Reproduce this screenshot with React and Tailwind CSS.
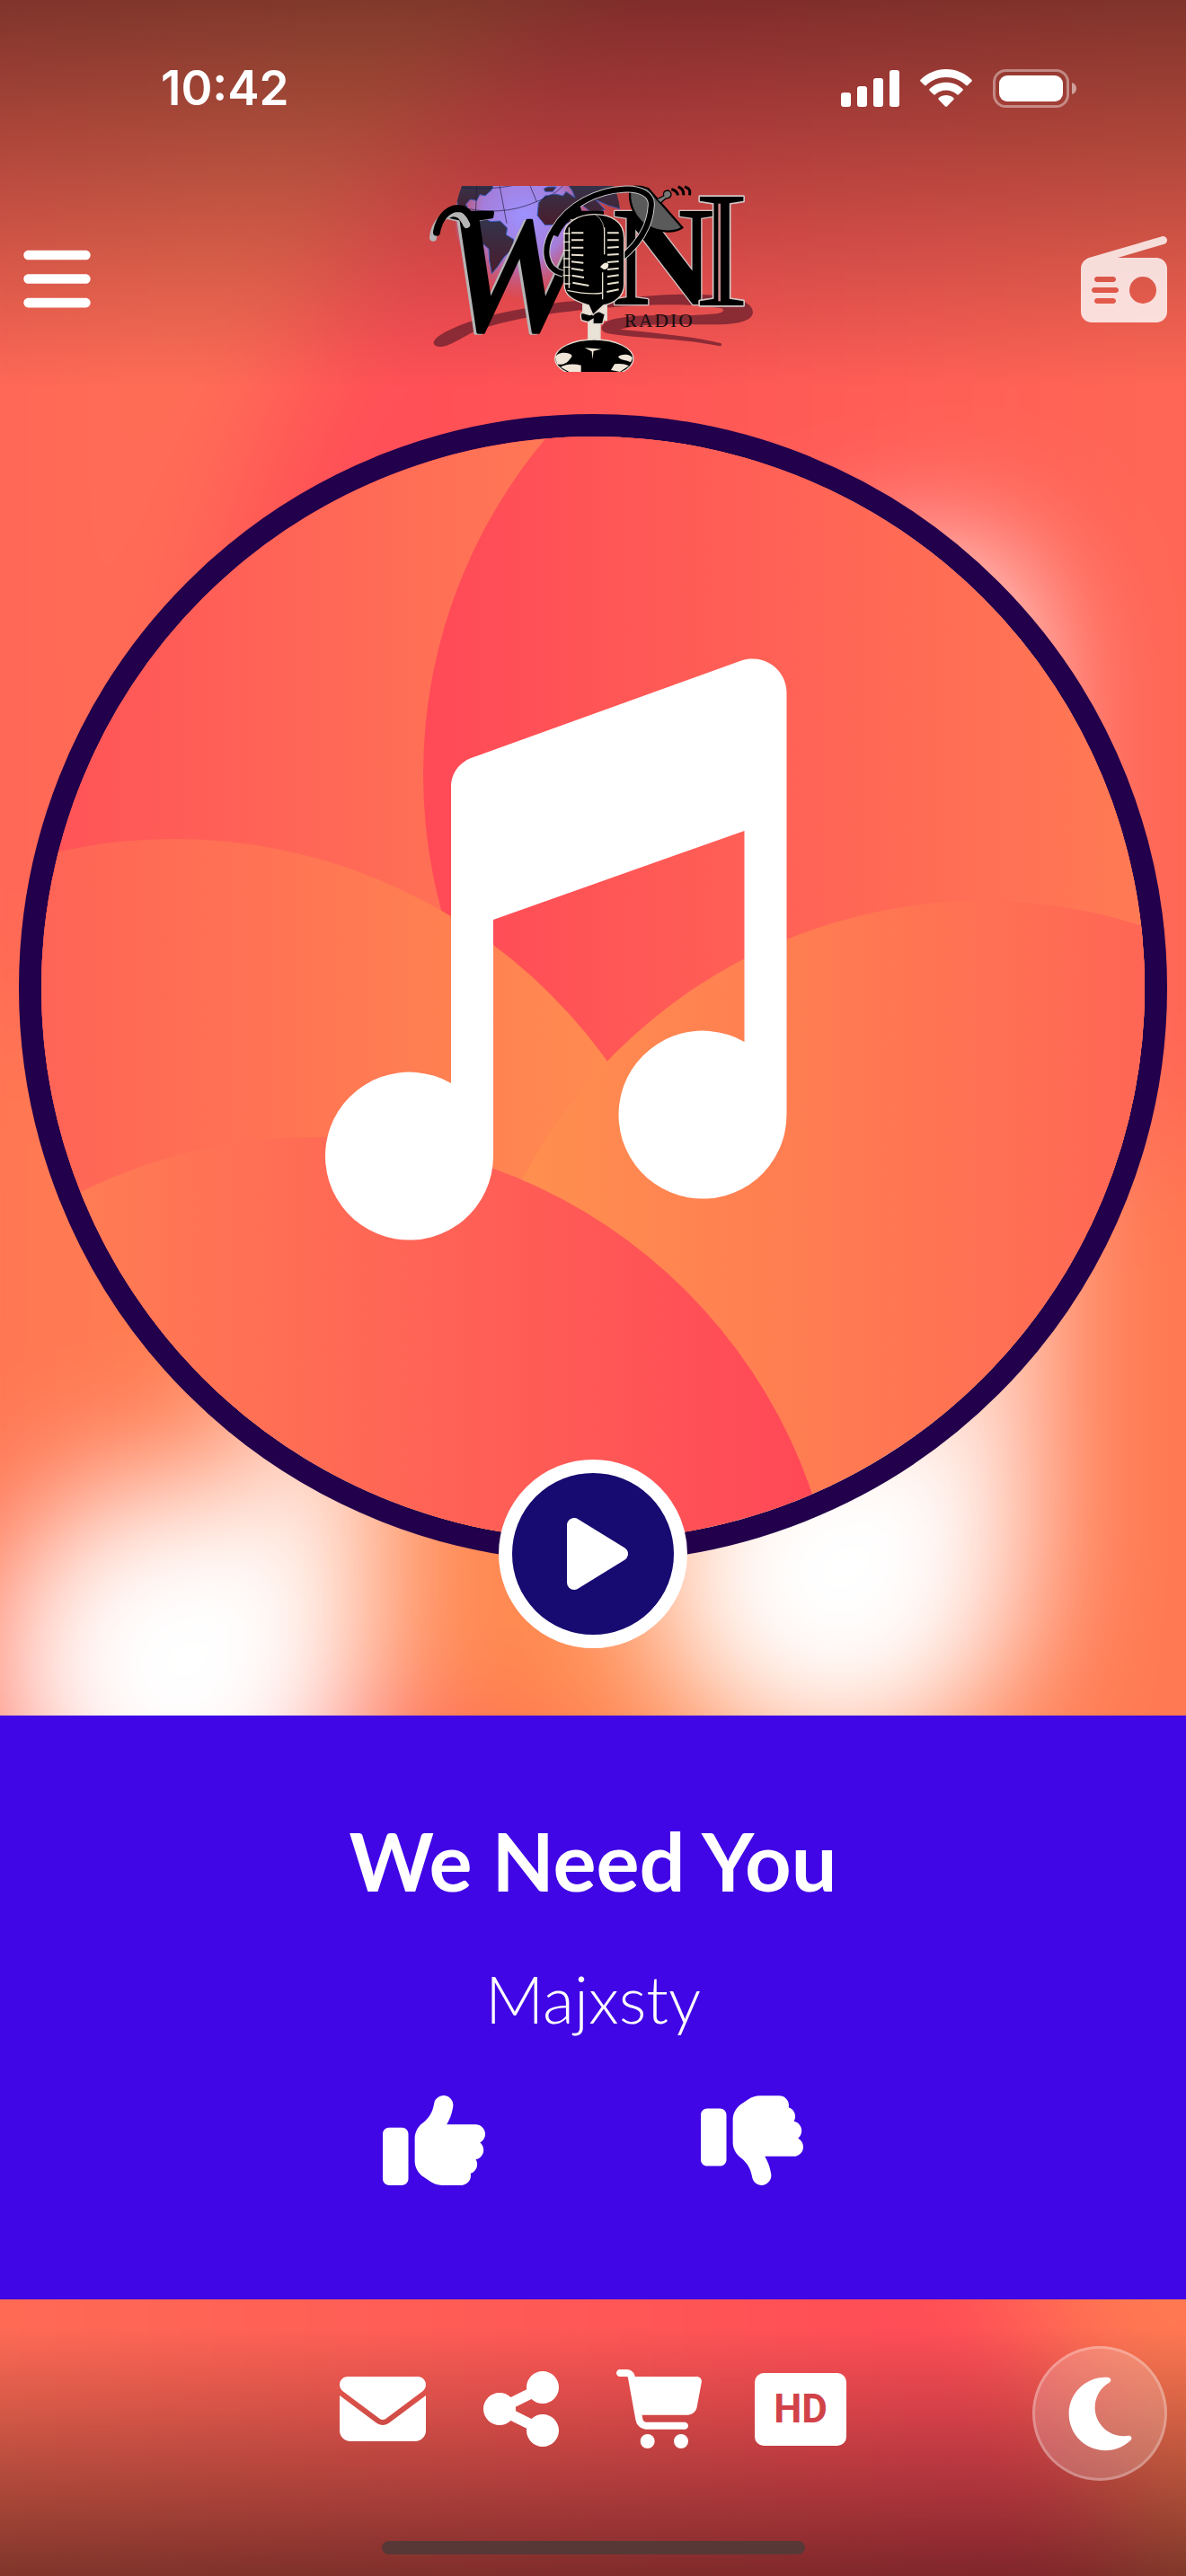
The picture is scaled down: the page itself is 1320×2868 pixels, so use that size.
import React, { useState } from "react";
import {
  FaBars,
  FaEnvelope,
  FaMoon,
  FaRadio,
  FaShareNodes,
  FaThumbsDown,
  FaThumbsUp,
} from "react-icons/fa6";

const track = { title: "We Need You", artist: "Majxsty" };

// Default cover art, also used (blurred) as the page backdrop
const CoverArt = ({ id, viewBox, className }) => (
  <svg
    viewBox={viewBox}
    preserveAspectRatio="xMidYMid slice"
    className={className}
    aria-hidden="true"
  >
    <defs>
      <linearGradient id={`${id}-base`} gradientUnits="userSpaceOnUse" x1="46" x2="610">
        <stop offset="0" stopColor="#ff5258" />
        <stop offset="1" stopColor="#ff7855" />
      </linearGradient>
      <linearGradient id={`${id}-top`} gradientUnits="userSpaceOnUse" x1="471" x2="1274">
        <stop offset="0" stopColor="#ff4957" />
        <stop offset="1" stopColor="#ff7b54" />
      </linearGradient>
      <linearGradient id={`${id}-left`} gradientUnits="userSpaceOnUse" x1="46" x2="677">
        <stop offset="0" stopColor="#ff6456" />
        <stop offset="1" stopColor="#ff8b50" />
      </linearGradient>
      <linearGradient id={`${id}-right`} gradientUnits="userSpaceOnUse" x1="581" x2="1274">
        <stop offset="0" stopColor="#ff8f4f" />
        <stop offset="1" stopColor="#ff6655" />
      </linearGradient>
      <linearGradient id={`${id}-bottom`} gradientUnits="userSpaceOnUse" x1="90" x2="915">
        <stop offset="0" stopColor="#ff7c54" />
        <stop offset="1" stopColor="#ff4757" />
      </linearGradient>
    </defs>
    <rect x="-400" y="0" width="2200" height="2200" fill={`url(#${id}-base)`} />
    <circle cx="1052" cy="862" r="581" fill={`url(#${id}-top)`} />
    <circle cx="194" cy="1527" r="593" fill={`url(#${id}-left)`} />
    <circle cx="1094" cy="1582" r="579" fill={`url(#${id}-right)`} />
    <circle cx="350" cy="1851" r="585" fill={`url(#${id}-bottom)`} />
    <path
      fill="#fff"
      d="M502 876C502 860 512 848 527 843L825 735.500A38 38 0 0 1 875.500 772V1241A93.500 93.500 0 1 1 828.500 1160V925L549 1024V1287A93.500 93.500 0 1 1 502 1206Z"
    />
  </svg>
);

const SignalIcon = () => (
  <svg viewBox="0 0 65 42" className="h-[42px] w-[65px]" fill="currentColor" aria-hidden="true">
    <rect x="0" y="26" width="11" height="16" rx="3" />
    <rect x="18" y="19" width="11" height="23" rx="3" />
    <rect x="36" y="10" width="11" height="32" rx="3" />
    <rect x="54" y="1" width="11" height="41" rx="3" />
  </svg>
);

const WifiIcon = () => (
  <svg viewBox="0 0 58 42" className="h-[42px] w-[58px]" fill="currentColor" aria-hidden="true">
    <path d="M29 0C40 0 50 4.500 57.200 11.500C58 12.300 58 13 57.300 13.700L53.200 17.800C52.500 18.500 51.800 18.500 51 17.800C45 12 37.400 9 29 9C20.600 9 13 12 7 17.800C6.200 18.500 5.500 18.500 4.800 17.800L.7 13.700C0 13 0 12.300 .8 11.500C8 4.500 18 0 29 0Z" />
    <path d="M29 14.700C36 14.700 42.300 17.300 47.200 21.700C48 22.400 48 23.200 47.300 23.900L43.100 28C42.400 28.700 41.700 28.700 40.900 28C37.600 25 33.500 23.400 29 23.400C24.500 23.400 20.400 25 17.100 28C16.300 28.700 15.600 28.700 14.900 28L10.700 23.900C10 23.200 10 22.400 10.800 21.700C15.700 17.300 22 14.700 29 14.700Z" />
    <path d="M29 29C32 29 34.800 30 37 31.700C37.900 32.400 37.900 33.100 37.200 33.900L30.200 41.200C29.400 42 28.600 42 27.800 41.200L20.800 33.900C20.100 33.100 20.100 32.400 21 31.700C23.200 30 26 29 29 29Z" />
  </svg>
);

const BatteryIcon = () => (
  <svg viewBox="0 0 93 43" className="h-[43px] w-[93px]" aria-hidden="true">
    <rect x="1.500" y="1.500" width="82" height="40" rx="13" fill="none" stroke="#fff" strokeOpacity=".4" strokeWidth="3" />
    <rect x="7" y="7" width="71" height="29" rx="9" fill="#fff" />
    <path d="M88 15C91.500 16 93 18.500 93 21.500S91.500 27 88 28Z" fill="#fff" fillOpacity=".5" />
  </svg>
);

const StationLogo = () => (
  <svg
    viewBox="0 51 1200 621"
    className="h-[207px] w-[400px] overflow-visible"
    role="img"
    aria-label="WONI Radio"
  >
    <defs>
      <radialGradient id="globe" gradientUnits="userSpaceOnUse" cx="370" cy="150" r="290">
        <stop offset="0" stopColor="#9d92ff" />
        <stop offset=".5" stopColor="#a184ea" stopOpacity=".9" />
        <stop offset="1" stopColor="#c05a80" stopOpacity="0" />
      </radialGradient>
      <linearGradient id="land" x1="0" y1="0" x2="0" y2="1">
        <stop offset="0" stopColor="#33344c" />
        <stop offset="1" stopColor="#4a1c2c" />
      </linearGradient>
      <clipPath id="logo-frame">
        <rect x="0" y="51" width="1200" height="621" />
      </clipPath>
      <clipPath id="globe-clip">
        <circle cx="416" cy="160" r="276" />
      </clipPath>
    </defs>

    {/* Globe */}
    <g clipPath="url(#logo-frame)">
      <g clipPath="url(#globe-clip)">
        <circle cx="416" cy="160" r="290" fill="url(#globe)" />
        <g fill="url(#land)" stroke="#3b5ec0" strokeWidth="3">
          <path d="M130 40H270L262 64L240 84L222 80L212 100L190 96L176 112L190 150L150 120Z" />
          <path d="M214 172L240 160L258 170L290 168L314 192L310 214L336 230L332 260L302 290L282 320L262 344L254 300L252 262L228 240L216 206Z" />
          <path d="M284 370L292 380L284 382Z" />
          <path d="M436 60L450 54H478L466 70L440 70Z" />
          <path d="M510 40H690L690 128L650 116L610 98L640 130L600 144L560 112L540 130L530 170L500 180L440 182L414 150L418 108L440 84L476 78L500 84L510 70L540 90L530 66Z" />
        </g>
        <path
          d="M150 56Q250 66 330 50M140 118Q290 158 410 104Q470 84 500 50M212 50L208 150M288 50L312 176M390 50L412 104"
          fill="none"
          stroke="#1e1e3c"
          strokeWidth="2"
        />
      </g>
    </g>

    {/* Cable shadow */}
    <path
      fill="#7a2430"
      fillOpacity=".85"
      d="M70 568C84 540 200 492 330 468C430 448 500 436 560 434C700 430 800 410 960 414C1080 418 1134 440 1134 474C1130 504 1080 514 1000 514C880 512 760 510 690 530C800 540 930 554 1026 576C1032 580 1030 586 1022 586C900 560 760 562 650 544C620 536 622 516 650 502C740 470 900 492 1010 478C1036 474 1040 466 1030 460C900 438 720 448 560 466C420 480 280 504 190 544C140 572 110 590 86 588C70 586 64 578 70 568Z"
    />

    {/* Lettering */}
    <g fontFamily="'Liberation Serif', serif" strokeLinejoin="round">
      <text
        x="86"
        y="530"
        fontSize="600"
        fontStyle="italic"
        fill="#000"
        stroke="#000"
        strokeWidth="10"
        className="drop-shadow-[-9px_3px_0px_#b5b5b5]"
      >
        W
      </text>
      <g fill="#000" stroke="#d0c4c4" strokeWidth="8" paintOrder="stroke">
        <text x="664" y="446" fontSize="475" fontWeight="700">N</text>
        <text x="937" y="450" fontSize="555" strokeWidth="10">I</text>
      </g>
    </g>
    <path d="M1022 110V436" stroke="#c98a8d" strokeWidth="8" />
    <path
      fill="none"
      stroke="#b5b5b5"
      strokeWidth="24"
      strokeLinecap="round"
      d="M66 224C68 190 90 150 130 142C150 140 164 150 178 180"
    />
    <path
      fill="none"
      stroke="#000"
      strokeWidth="24"
      strokeLinecap="round"
      d="M78 206C84 166 110 128 148 126C180 126 196 150 206 190"
    />

    {/* Satellite dish */}
    <g stroke="#000" strokeWidth="7">
      <path fill="#5a5a5a" d="M726 56C716 100 734 170 800 194C840 208 880 204 898 190L784 60Q750 48 726 56Z" />
      <path fill="#777" d="M812 96L836 84Q832 66 852 66Q868 76 856 90L842 94L826 108Z" strokeWidth="4" />
      <path fill="none" d="M862 62Q880 66 884 82M884 54Q904 60 902 82M906 54Q928 60 922 82" strokeWidth="9" />
    </g>

    {/* Cable loop around the microphone */}
    <g fill="none">
      <path stroke="#c9c9c9" strokeWidth="24" d="M500 344C440 330 428 260 470 196C520 110 620 66 700 62C760 58 800 80 794 120C790 180 760 240 690 296" />
      <path stroke="#000" strokeWidth="18" d="M500 344C440 330 428 260 470 196C520 110 620 66 700 62C760 58 800 80 794 120C790 180 760 240 690 296" />
      <path stroke="#000" strokeWidth="28" d="M470 216C490 170 520 140 560 128" />
    </g>

    {/* Microphone */}
    <g clipPath="url(#logo-frame)">
      <g stroke="#e0d8cf" strokeWidth="4">
        <rect x="584" y="500" width="40" height="76" fill="#eae2d6" />
        <path fill="#eae2d6" d="M566 446H646V500H566Z" />
        <path fill="#000" d="M562 474Q556 484 562 500L584 506L600 496V512H632L640 480L620 470L590 482Z" />
        <path fill="#000" d="M604 146C660 146 704 170 704 226V380C704 420 670 444 634 450L600 482L586 450C540 436 504 420 504 380V210C504 176 550 146 604 146Z" />
        <ellipse cx="604" cy="628" rx="131" ry="64" fill="#000" />
      </g>
      <g stroke="#e8e0d0" strokeWidth="6" fill="none">
        <path d="M528 208H568M528 232H568M528 257H568M528 281L568 283M528 304L568 308M528 327L568 333M530 350L570 357M532 374L586 384" />
        <path d="M648 208H686M648 232H686M648 257L686 255M648 281L686 279M648 306L686 303M648 330L686 326M648 354L686 349M648 379L686 373M646 405L686 397" />
        <path d="M520 190V392M514 400Q590 416 634 408M638 190V280M632 340V430" strokeWidth="4" />
        <path d="M500 210H524M500 238H524M500 266H524M500 294H524M500 322H524M500 350H524M504 378H524" strokeWidth="4" />
        <path d="M610 148Q640 166 638 220" strokeWidth="2" />
      </g>
      <path fill="#f3ecdf" d="M624 322Q640 300 652 312Q652 330 636 330Z" />
      <g fill="#efe6d8">
        <path d="M474 624C480 604 520 604 530 618C520 640 500 652 480 646Z" />
        <path d="M492 656Q520 640 560 650V672H520Z" />
        <path d="M732 626C726 610 690 612 684 622C690 634 712 632 726 640Z" />
        <path d="M660 666L672 646Q700 642 720 652L690 672Z" />
        <path d="M572 592L596 604L598 630L602 602L628 596L604 594Z" />
      </g>
    </g>

    <text
      x="704"
      y="523"
      fontFamily="'Liberation Serif', serif"
      fontSize="64"
      fill="#160c0e"
      className="tracking-widest"
    >
      RADIO
    </text>
  </svg>
);

const StatusBar = () => (
  <div className="flex items-center justify-between pt-[68px] pr-[122px] pl-[179px] text-white">
    <time className="font-['Inter',sans-serif] text-[53px] leading-[60px] font-semibold">10:42</time>
    <div className="flex items-center gap-[23px]">
      <SignalIcon />
      <WifiIcon />
      <BatteryIcon />
    </div>
  </div>
);

const Header = () => (
  <header className="bg-linear-to-b from-black/50 to-transparent pb-[18px]">
    <StatusBar />
    <div className="mt-[79px] grid grid-cols-[1fr_auto_1fr] items-center px-[21px]">
      <button type="button" aria-label="Open menu" className="justify-self-start text-white">
        <FaBars className="size-[85px]" />
      </button>
      <StationLogo />
      <button type="button" aria-label="Stations" className="justify-self-end text-white/80">
        <FaRadio className="size-[96px]" />
      </button>
    </div>
  </header>
);

const Player = () => {
  const [playing, setPlaying] = useState(false);

  return (
    <section className="px-[21px] pt-[29px] pb-[75px]">
      <div className="aspect-square w-full overflow-hidden rounded-full border-[25px] border-[#22004b]">
        <CoverArt id="cover" viewBox="46 486 1228 1228" className="h-full w-full" />
      </div>
      <button
        type="button"
        aria-label={playing ? "Pause" : "Play"}
        onClick={() => setPlaying(!playing)}
        className="relative mx-auto -mt-[114px] flex size-[210px] items-center justify-center rounded-full border-[15px] border-white bg-[#170a70]"
      >
        {playing ? (
          <svg viewBox="0 0 80 80" className="size-[80px]" fill="#fff" aria-hidden="true">
            <rect x="12" y="4" width="20" height="72" rx="6" />
            <rect x="48" y="4" width="20" height="72" rx="6" />
          </svg>
        ) : (
          <svg viewBox="0 0 80 80" className="size-[80px]" aria-hidden="true">
            <path
              d="M19 8V72L71 40Z"
              fill="#fff"
              stroke="#fff"
              strokeWidth="16"
              strokeLinejoin="round"
            />
          </svg>
        )}
      </button>
    </section>
  );
};

const NowPlaying = () => (
  <section className="flex flex-col items-center bg-[#4006e5] pt-[107px] pb-[120px] text-white">
    <h1 className="font-['Lato',sans-serif] text-[90px] leading-[108px] font-bold">{track.title}</h1>
    <p className="mt-[60px] font-['Lato',sans-serif] text-[72px] leading-[80px] font-light">
      {track.artist}
    </p>
    <div className="mt-[61px] flex gap-[240px]">
      <button type="button" aria-label="Like">
        <FaThumbsUp className="size-[114px]" />
      </button>
      <button type="button" aria-label="Dislike">
        <FaThumbsDown className="size-[114px]" />
      </button>
    </div>
  </section>
);

const Footer = () => (
  <footer className="bg-linear-to-b from-transparent from-10% to-black/50 px-[21px] pt-[52px] pb-[24px] text-white">
    <div className="grid grid-cols-[1fr_auto_1fr] items-center">
      <nav className="col-start-2 flex items-center gap-[58px] pb-[10px]">
        <a href="#contact" aria-label="Contact">
          <FaEnvelope className="size-[96px]" />
        </a>
        <a href="#share" aria-label="Share">
          <FaShareNodes className="size-[96px]" />
        </a>
        <a href="#store" aria-label="Store">
          <svg viewBox="0 -16 576 528" className="h-[88px] w-[96px]" fill="currentColor" aria-hidden="true">
            <path d="M24-16C10.700-16 0-5.300 0 8S10.700 32 24 32l45.300 0c3.900 0 7.200 2.800 7.900 6.600l52.100 286.300c6.200 34.200 36 59.100 70.800 59.100L456 384c13.300 0 24-10.700 24-24s-10.700-24-24-24l-255.900 0c-11.600 0-21.500-8.300-23.600-19.700l-5.100-28.300 303.600 0c30.800 0 57.200-21.900 62.900-52.200L568.900 69.900C572.600 50.200 557.500 32 537.400 32l-412.700 0-.4-2c-4.800-26.600-28-46-55.100-46L24-16zM208 512a48 48 0 1 0 0-96 48 48 0 1 0 0 96zm224 0a48 48 0 1 0 0-96 48 48 0 1 0 0 96z" />
          </svg>
        </a>
        <a
          href="#quality"
          className="flex h-[81px] w-[102px] items-center justify-center rounded-[10px] bg-white font-['Roboto',sans-serif] text-[44px] leading-none font-bold text-[#d14348]"
        >
          HD
        </a>
      </nav>
      <button
        type="button"
        aria-label="Sleep timer"
        className="flex size-[150px] items-center justify-center justify-self-end rounded-full border-[3px] border-white/25 bg-white/20"
      >
        <FaMoon className="size-[93px]" />
      </button>
    </div>
    <div className="mx-auto mt-[67px] h-[15px] w-[471px] rounded-full bg-[#583836]" />
  </footer>
);

const App = () => (
  <div className="relative min-h-screen overflow-hidden bg-[#ff6655]">
    <div className="absolute -inset-40">
      <CoverArt id="backdrop" viewBox="-50 390 1420 1420" className="h-full w-full blur-[74px]" />
    </div>
    <main className="relative flex min-h-screen flex-col">
      <Header />
      <Player />
      <NowPlaying />
      <Footer />
    </main>
  </div>
);

export default App;
